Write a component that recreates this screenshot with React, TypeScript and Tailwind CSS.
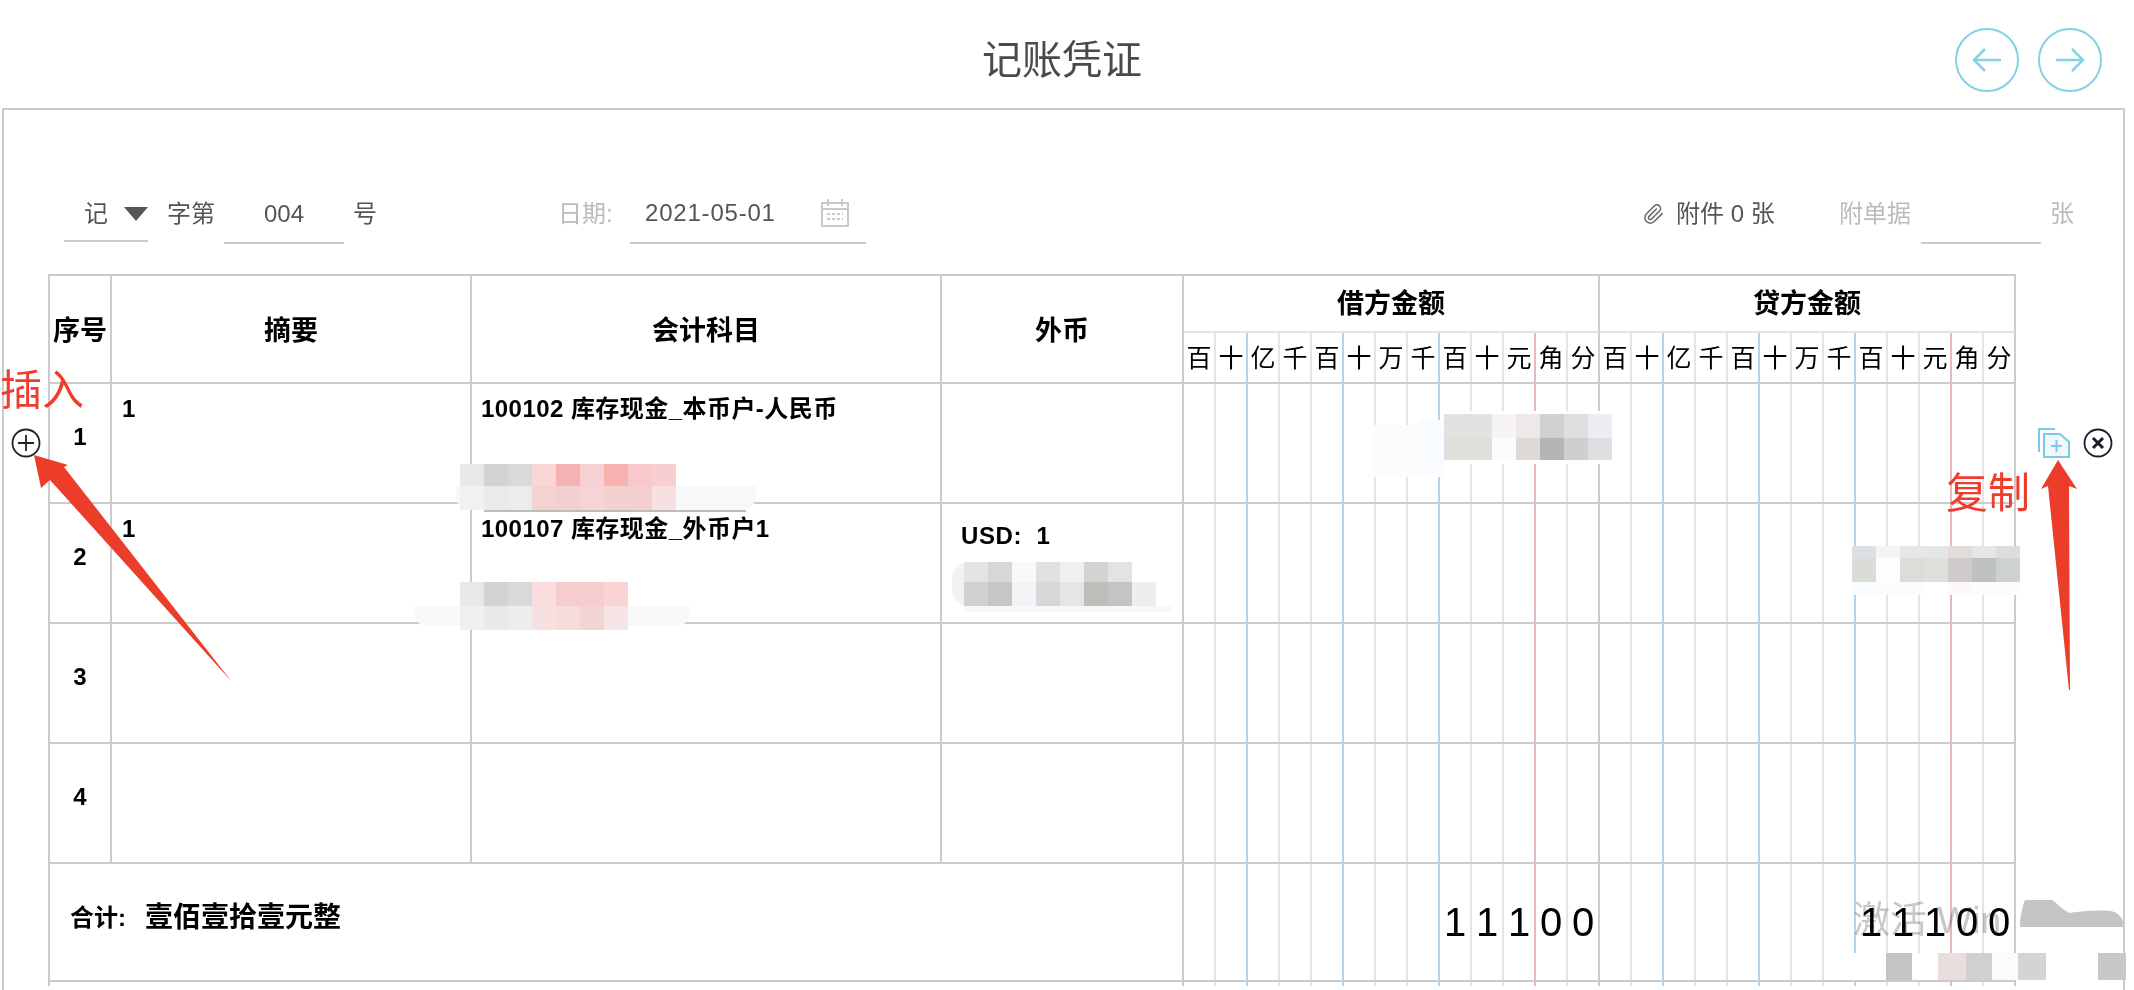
import React from 'react';

const units = ['百', '十', '亿', '千', '百', '十', '万', '千', '百', '十', '元', '角', '分'];

// line colour on the right of each money column
const lineClass = (i: number) => {
  if (i === 12) return 'border-r-2 border-[#cccccc]';
  if (i === 10) return 'border-r-2 border-[#e8b8b8]';
  if (i === 1 || i === 4 || i === 7) return 'border-r-2 border-[#aed6f0]';
  return 'border-r-2 border-[#e4e4e4]';
};

const Digits: React.FC<{ labels?: string[]; className?: string }> = ({ labels, className }) => (
  <div className={`grid w-[416px] shrink-0 grid-cols-13 ${className ?? ''}`}>
    {units.map((_, i) => (
      <div key={i} className={`flex items-center justify-center ${lineClass(i)}`}>
        {labels?.[i]}
      </div>
    ))}
  </div>
);

const Row: React.FC<{ no: number; summary?: string; subject?: string; foreign?: string }> = ({ no, summary, subject, foreign }) => (
  <div className="flex h-[120px] border-b-2 border-[#cccccc]">
    <div className="flex w-[62px] shrink-0 items-center justify-center border-r-2 border-[#cccccc] pb-[12px] text-[24px] font-bold">{no}</div>
    <div className="w-[360px] shrink-0 border-r-2 border-[#cccccc] pl-[10px] pt-[7px] text-[24px] font-bold leading-[36px]">{summary}</div>
    <div className="w-[470px] shrink-0 border-r-2 border-[#cccccc] pl-[9px] pt-[7px] text-[24px] font-bold leading-[36px] tracking-[0.45px]">{subject}</div>
    <div className="w-[242px] shrink-0 whitespace-pre border-r-2 border-[#cccccc] pl-[19px] pt-[14px] text-[24px] font-bold leading-[36px] tracking-[0.6px]">{foreign}</div>
    <Digits />
    <Digits />
  </div>
);

const Mosaic: React.FC<{ className: string; rows: string[][]; h: number[] }> = ({ className, rows, h }) => (
  <div className={`absolute flex flex-col ${className}`}>
    {rows.map((row, r) => (
      <div key={r} className="flex" style={{ height: h[r] }}>
        {row.map((c, i) => (
          <div key={i} className="w-[24px]" style={{ background: c }} />
        ))}
      </div>
    ))}
  </div>
);

const CircleArrow: React.FC<{ dir: 'left' | 'right' }> = ({ dir }) => (
  <div className="flex h-[64px] w-[64px] items-center justify-center rounded-full border-2 border-[#82d3e2]">
    <svg width="32" height="26" viewBox="0 0 32 26" fill="none" stroke="#82d3e2" strokeWidth="2.5" className={dir === 'right' ? 'rotate-180' : ''}>
      <path d="M14 2 L3 13 L14 24" />
      <path d="M3 13 H30" />
    </svg>
  </div>
);

export default function App() {
  return (
    <div className="relative h-[990px] w-[2134px] overflow-hidden bg-white font-['Liberation_Sans','Noto_Sans_CJK_SC',sans-serif] text-black">
      {/* title bar */}
      <div className="relative flex h-[108px] items-center justify-center pr-[10px]">
        <div className="pt-[11px] text-[40px] leading-none text-[#4a4a4a]">记账凭证</div>
        <div className="absolute right-[32px] top-[28px] flex gap-[19px]">
          <CircleArrow dir="left" />
          <CircleArrow dir="right" />
        </div>
      </div>

      <div className="ml-[2px] h-[882px] w-[2123px] border-x-2 border-t-2 border-[#cccccc]">
        {/* voucher head */}
        <div className="flex h-[164px] items-start pt-[74px] text-[24px] leading-[60px] text-[#555555]">
          <div className="ml-[60px] flex h-[58px] w-[84px] items-start border-b-2 border-[#cccccc] pl-[20px]">
            <span>记</span>
            <svg width="24" height="14" viewBox="0 0 24 14" className="ml-[16px] mt-[23px]"><path d="M0 0 H24 L12 14 Z" fill="#555555" /></svg>
          </div>
          <span className="ml-[19px]">字第</span>
          <div className="ml-[9px] h-[60px] w-[120px] border-b-2 border-[#cccccc] text-center">004</div>
          <span className="ml-[9px]">号</span>
          <span className="ml-[181px] w-[72px] text-[#bbbbbb]">日期:</span>
          <div className="flex h-[60px] w-[236px] items-center justify-between border-b-2 border-[#cccccc] pl-[15px] pr-[16px] tracking-[0.8px]">
            <span>2021-05-01</span>
            <svg width="30" height="30" viewBox="0 0 30 30" fill="none" stroke="#c9c9cd" strokeWidth="2">
              <rect x="2" y="5" width="26" height="23" />
              <path d="M8 1V8M22 1V8M2 11H28" />
              <path d="M7 16H23M7 21H23" strokeDasharray="3 2" />
            </svg>
          </div>
          <svg width="22" height="22" viewBox="0 0 24 24" fill="none" stroke="#666666" strokeWidth="1.6" className="ml-[777px] mt-[19px]">
            <path d="m21.44 11.05-9.19 9.19a6 6 0 0 1-8.49-8.49l8.57-8.57A4 4 0 1 1 18 8.84l-8.59 8.57a2 2 0 0 1-2.83-2.83l8.49-8.48" />
          </svg>
          <span className="ml-[11px] w-[101px] whitespace-nowrap">附件 0 张</span>
          <span className="ml-[62px] w-[72px] text-[#bbbbbb]">附单据</span>
          <div className="ml-[10px] h-[60px] w-[120px] border-b-2 border-[#cccccc]" />
          <span className="ml-[9px] text-[#bbbbbb]">张</span>
        </div>

        {/* voucher table */}
        <div className="ml-[44px] w-[1968px] border-l-2 border-t-2 border-[#cccccc]">
          <div className="flex h-[108px] border-b-2 border-[#cccccc] text-[27px] font-bold">
            <div className="flex w-[62px] shrink-0 items-center justify-center whitespace-nowrap border-r-2 border-[#cccccc] pt-[4px]">序号</div>
            <div className="flex w-[360px] shrink-0 items-center justify-center border-r-2 border-[#cccccc] pt-[4px]">摘要</div>
            <div className="flex w-[470px] shrink-0 items-center justify-center border-r-2 border-[#cccccc] pt-[4px]">会计科目</div>
            <div className="flex w-[242px] shrink-0 items-center justify-center border-r-2 border-[#cccccc] pt-[4px]">外币</div>
            {['借方金额', '贷方金额'].map((t) => (
              <div key={t} className="w-[416px] shrink-0">
                <div className="flex h-[57px] items-center justify-center border-b-2 border-r-2 border-[#e4e4e4] border-r-[#cccccc] pt-[2px]">{t}</div>
                <Digits labels={units} className="h-[49px] text-[25px] font-normal [&>div]:pt-[3px]" />
              </div>
            ))}
          </div>
          <Row no={1} summary="1" subject="100102 库存现金_本币户-人民币" />
          <Row no={2} summary="1" subject="100107 库存现金_外币户1" foreign="USD:  1" />
          <Row no={3} />
          <Row no={4} />
          <div className="flex h-[118px] border-b-2 border-[#cccccc]">
            <div className="flex w-[1134px] shrink-0 items-center whitespace-pre border-r-2 border-[#cccccc] pb-[8px] pl-[20px] font-bold">
              <span className="w-[75px] text-[24px]">合计:</span>
              <span className="text-[28px]">壹佰壹拾壹元整</span>
            </div>
            <Digits labels={['', '', '', '', '', '', '', '', '1', '1', '1', '0', '0']} className="text-[40px]" />
            <Digits labels={['', '', '', '', '', '', '', '', '1', '1', '1', '0', '0']} className="text-[40px]" />
          </div>
          <div className="flex h-[4px]">
            <div className="w-[1134px] shrink-0 border-r-2 border-[#cccccc]" />
            <Digits />
            <Digits />
          </div>
        </div>
      </div>

      {/* row action icons */}
      <svg width="30" height="30" viewBox="0 0 30 30" fill="none" stroke="#222222" strokeWidth="1.8" className="absolute left-[11px] top-[428px]">
        <circle cx="15" cy="15" r="13.5" />
        <path d="M7 15H23M15 7V23" />
      </svg>
      <svg width="32" height="32" viewBox="0 0 32 32" fill="none" stroke="#7cc8e6" strokeWidth="2" className="absolute left-[2038px] top-[427px]">
        <path d="M1 25V2H17" />
        <path d="M6 7H22L31 15V30H6Z" fill="#f1f8fc" />
        <path d="M13 19H24M18.500 13V25" />
      </svg>
      <svg width="30" height="30" viewBox="0 0 30 30" fill="none" stroke="#1c1c2c" className="absolute left-[2083px] top-[428px]">
        <circle cx="15" cy="15" r="13.5" strokeWidth="1.8" />
        <path d="M10 10L20 20M20 10L10 20" strokeWidth="3" />
      </svg>

      {/* blurred amounts and names */}
      <div className="absolute left-[456px] top-[486px] h-[24px] w-[300px] rounded-b-[14px] bg-[#f8f8f8]" />
      <div className="absolute left-[484px] top-[510px] h-[2px] w-[262px] bg-[#bcbcbc]" />
      <Mosaic
        className="left-[460px] top-[464px]"
        h={[22, 24]}
        rows={[
          ['#e8e8e8', '#d2d3d2', '#d8d9da', '#fad6d6', '#f5b2b2', '#f9d0d4', '#f6b2ae', '#f8c8cb', '#f8ced1'],
          ['#f1f1f1', '#e9eaea', '#ececed', '#f5d2d2', '#f4cfcf', '#f6d3d5', '#f4d0cf', '#f4cfcf', '#f6e0e0'],
        ]}
      />
      <div className="absolute left-[414px] top-[606px] h-[20px] w-[276px] rounded-b-[14px] bg-[#f9f9f9]" />
      <Mosaic
        className="left-[460px] top-[582px]"
        h={[24, 24]}
        rows={[
          ['#e8e8e8', '#d2d3d2', '#d8d9da', '#fbdde0', '#f6cccf', '#f6cccf', '#f8d4d4'],
          ['#f0f0f0', '#e8e9e9', '#eeeeef', '#f7e0e0', '#f5dcdd', '#f3d4d4', '#f6e4e4'],
        ]}
      />
      <div className="absolute left-[1373px] top-[425px] h-[52px] w-[71px] bg-[#fcfcfc]" />
      <div className="absolute left-[1420px] top-[420px] h-[50px] w-[24px] bg-[#f8fbff]" />
      <div className="absolute left-[1444px] top-[411px] h-[53px] w-[184px] rounded-r-[20px] bg-white" />
      <Mosaic
        className="left-[1444px] top-[414px]"
        h={[24, 22]}
        rows={[
          ['#e3e2e0', '#e3e2e0', '#f6f5f3', '#ece9e8', '#d1d1d2', '#e0dfdd', '#ebedf0'],
          ['#dfe0dc', '#dfe0dc', '#fcfcfc', '#dedbd7', '#b2b6b8', '#cfcfcd', '#dce0e2'],
        ]}
      />
      <div className="absolute left-[952px] top-[562px] h-[44px] w-[20px] rounded-l-[16px] bg-[#f2f2ee]" />
      <div className="absolute left-[964px] top-[606px] h-[6px] w-[208px] rounded-b-[6px] bg-[#f8f8f8]" />
      <Mosaic
        className="left-[964px] top-[562px]"
        h={[20, 24]}
        rows={[
          ['#e5e3e4', '#d5d7d9', '#faf9f6', '#dfe0e2', '#f0f0f1', '#d5d3d1', '#e2e3e5'],
          ['#cfd0d2', '#c6c7c5', '#f2f3f7', '#d7d7d8', '#e5e5e6', '#bfbdb9', '#c4c4c6', '#edeef0'],
        ]}
      />
      <Mosaic
        className="left-[1852px] top-[546px]"
        h={[12, 24, 13]}
        rows={[
          ['#dde0e2', '#f5f4f2', '#e7e7e8', '#e6e6e6', '#e2dcdb', '#e5e6e7', '#dcdddf'],
          ['#dbdcd7', '#fdfdfd', '#dcddd6', '#dfe0da', '#cfcbca', '#bec0c2', '#cdd1d2'],
          ['#f8fbff', '#fcfcfc', '#fcfcfc', '#ffffff', '#fcfaf9', '#fcfcfc', '#fbfbfb'],
        ]}
      />

      {/* activation watermark, half hidden */}
      <div className="absolute left-[1853px] top-[897px] whitespace-pre text-[37px] leading-[48px] text-[#c8c8c8] mix-blend-multiply">激活 Win</div>
      <svg width="104" height="32" viewBox="0 0 104 32" className="absolute left-[2020px] top-[899px]">
        <path d="M0 24C1 14 3 5 5 1H32C38 5 42 11 50 14C62 12 80 11 90 12C98 13 103 19 103 24V28H0Z" fill="#c4c4c4" />
      </svg>
      <div className="absolute left-[1852px] top-[953px] flex h-[27px] w-[282px] bg-white">
        <div className="ml-[34px] w-[26px] bg-[#c4c4c4]" />
        <div className="ml-[26px] w-[28px] bg-[#e8dedc]" />
        <div className="w-[26px] bg-[#d0d0d0]" />
        <div className="w-[26px] bg-[#fbfbfb]" />
        <div className="w-[28px] bg-[#d4d4d4]" />
        <div className="ml-[52px] w-[28px] bg-[#c8c8c8]" />
      </div>

      {/* hand drawn notes on the screenshot */}
      <div className="absolute left-[0px] top-[365px] text-[42px] leading-[52px] text-[#f03c2e]">插入</div>
      <div className="absolute left-[1946px] top-[468px] text-[42px] leading-[52px] text-[#f03c2e]">复制</div>
      <svg width="2134" height="990" viewBox="0 0 2134 990" className="pointer-events-none absolute left-0 top-0">
        <polygon points="34,455 68,465 64,467 232,682 50,480 41,488" fill="#ec3d2b" />
        <polygon points="2058,460 2077,489 2069,486 2070,690 2069,690 2048,486 2041,489" fill="#ec3d2b" />
      </svg>
    </div>
  );
}
